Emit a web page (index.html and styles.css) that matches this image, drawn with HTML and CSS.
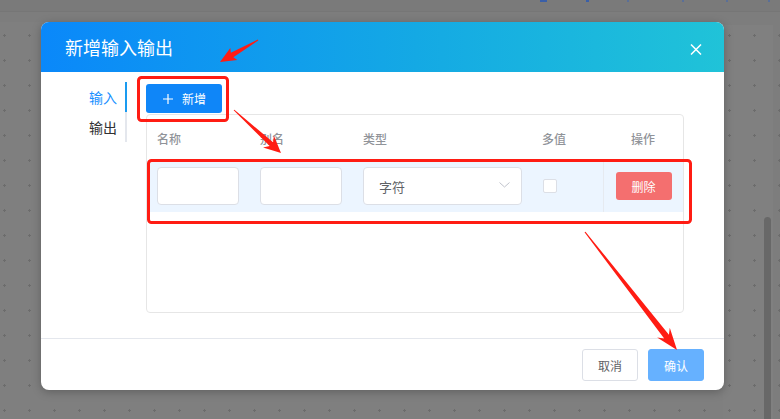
FILE: index.html
```html
<!DOCTYPE html>
<html lang="zh-CN">
<head>
<meta charset="utf-8">
<title>新增输入输出</title>
<link rel="stylesheet" href="styles.css">
</head>
<body>
<svg class="grid-bg" width="780" height="419" viewBox="0 0 780 419">
  <defs>
    <pattern id="dots" x="0" y="0" width="25" height="25" patternUnits="userSpaceOnUse">
      <rect x="3" y="10" width="3" height="1" fill="#6c6c6c"/>
      <rect x="4" y="9" width="1" height="3" fill="#6c6c6c"/>
    </pattern>
  </defs>
  <rect x="0" y="0" width="780" height="419" fill="url(#dots)"/>
</svg>

<div class="topbar">
  <svg class="topbar-icons" width="780" height="12" viewBox="0 0 780 12">
    <rect x="540" y="0" width="7" height="2" fill="#3a5fa8"/>
    <rect x="586" y="0" width="3" height="2" fill="#3a5fa8"/>
    <rect x="627" y="0" width="2" height="2" fill="#5a6f98"/>
    <rect x="682" y="0" width="2" height="2" fill="#5a6f98"/>
    <rect x="726" y="0" width="2" height="2" fill="#5a6f98"/>
    <rect x="768" y="0" width="2" height="2" fill="#5a6f98"/>
  </svg>
</div>

<div class="workspace">
  <div class="canvas"></div>
  <div class="side-panel">
    <div class="scrollbar"></div>
  </div>
</div>

<div class="dialog">
  <div class="dlg-header">
    <span class="dlg-title">新增输入输出</span>
    <svg class="dlg-close" width="12" height="11" viewBox="0 0 12 11">
      <path d="M1 0.5L11 10.5M11 0.5L1 10.5" stroke="#fff" stroke-width="1.5" fill="none"/>
    </svg>
  </div>

  <div class="dlg-body">
    <div class="tabs">
      <div class="tab active">输入</div>
      <div class="tab">输出</div>
    </div>

    <div class="panel">
      <button class="btn-add">
        <svg width="10" height="10" viewBox="0 0 10 10">
          <path d="M5 0V10M0 5H10" stroke="#fff" stroke-width="1.2" fill="none"/>
        </svg>
        <span>新增</span>
      </button>

      <div class="table">
        <div class="thead cols">
          <div class="cell">名称</div>
          <div class="cell">别名</div>
          <div class="cell">类型</div>
          <div class="cell">多值</div>
          <div class="cell center">操作</div>
        </div>
        <div class="trow cols">
          <div class="cell"><div class="input"></div></div>
          <div class="cell"><div class="input"></div></div>
          <div class="cell">
            <div class="select">
              <span>字符</span>
              <svg width="11" height="6" viewBox="0 0 11 6">
                <path d="M0.5 0.5L5.5 5L10.5 0.5" stroke="#c0c4cc" stroke-width="1" fill="none"/>
              </svg>
            </div>
          </div>
          <div class="cell"><span class="checkbox"></span></div>
          <div class="cell center op"><button class="btn-del">删除</button></div>
        </div>
      </div>
    </div>
  </div>

  <div class="dlg-footer">
    <button class="btn-cancel">取消</button>
    <button class="btn-ok">确认</button>
  </div>
</div>

<svg class="annot" width="780" height="419" viewBox="0 0 780 419">
  <rect x="138.5" y="77.5" width="89" height="43" rx="3" fill="none" stroke="#ff1c13" stroke-width="3"/>
  <rect x="148.5" y="160.5" width="542" height="62" rx="3" fill="none" stroke="#ff1c13" stroke-width="3"/>
  <polygon fill="#ff1c13" points="257.75,39.57 230.85,52.84 230.3,47.94 220,62 237.3,60.06 233.35,57.16 258.25,40.43"/>
  <polygon fill="#ff1c13" points="234.34,109.63 273.09,142.36 273.85,135.62 281,153 263.05,147.42 269.71,146.05 233.66,110.37"/>
  <polygon fill="#ff1c13" points="585.47,231.63 668.92,334.74 669.78,327.72 677,350 657.16,337.56 664.18,338.44 584.53,232.37"/>
</svg>
</body>
</html>
```

FILE: styles.css
```css
* { box-sizing: border-box; }

html, body {
  margin: 0;
  padding: 0;
}

body {
  width: 780px;
  height: 419px;
  overflow: hidden;
  position: relative;
  background: #7d7d7d;
  font-family: "Noto Sans CJK SC", "Noto Sans", sans-serif;
}

.grid-bg {
  position: absolute;
  left: 0;
  top: 0;
}

.topbar {
  position: relative;
  z-index: 1;
  height: 12px;
  background: #7a7a7a;
  border-bottom: 1px solid #767676;
}

.topbar-icons {
  display: block;
}

.workspace {
  display: flex;
  height: 407px;
}

.canvas {
  flex: 1;
  margin-top: 10px;
  background: #7f7f7f;
}

.side-panel {
  width: 50px;
  margin-top: 13px;
  margin-right: 7px;
  background: #808080;
  display: flex;
  flex-direction: column;
  align-items: flex-end;
  padding-right: 2px;
}

.scrollbar {
  margin-top: 192px;
  width: 7px;
  flex: 1;
  background: #686868;
  border-radius: 4px 4px 0 0;
}

/* Dialog */
.dialog {
  position: absolute;
  left: 41px;
  top: 22px;
  width: 683px;
  height: 368px;
  background: #fff;
  border-radius: 8px;
  overflow: hidden;
  box-shadow: 0 2px 10px rgba(0, 0, 0, 0.25);
  display: flex;
  flex-direction: column;
}

.dlg-header {
  height: 50px;
  flex: none;
  background: linear-gradient(90deg, #0a88fa 0%, #14a9e4 55%, #20c3d8 100%);
  display: flex;
  align-items: center;
  justify-content: space-between;
  padding: 0 22px 0 24px;
}

.dlg-title {
  color: #fff;
  font-size: 18px;
  line-height: 24px;
  margin-top: -1px;
}

.dlg-close {
  display: block;
  margin-top: 4px;
}

.dlg-body {
  flex: 1;
  display: flex;
  padding-top: 10px;
}

.tabs {
  width: 86px;
  flex: none;
  display: flex;
  flex-direction: column;
  align-self: flex-start;
}

.tab {
  height: 30px;
  line-height: 30px;
  text-align: right;
  padding-right: 8px;
  font-size: 14px;
  color: #303133;
  border-right: 2px solid #e4e7ed;
}

.tab.active {
  color: #1890ff;
  border-right-color: #1a9bf0;
}

.panel {
  margin-left: 19px;
  width: 538px;
  display: flex;
  flex-direction: column;
  padding-top: 2px;
}

.btn-add {
  width: 76px;
  height: 29px;
  border: none;
  border-radius: 3px;
  background: #0f86f8;
  color: #fff;
  font-family: inherit;
  font-size: 12px;
  display: flex;
  align-items: center;
  gap: 9px;
  padding: 0 0 0 17px;
}

.btn-add svg { display: block; }

.table {
  margin-top: 1px;
  height: 199px;
  border: 1px solid #e6e6e6;
  border-radius: 4px;
}

.cols {
  display: grid;
  grid-template-columns: 103px 103px 179px 71px 1fr;
}

.cell {
  display: flex;
  align-items: center;
  padding-left: 10px;
}

.cell.center {
  justify-content: center;
  padding-left: 0;
}

.thead {
  height: 45px;
  font-size: 12px;
  font-weight: 500;
  color: #909399;
}

.thead .cell { padding-top: 1px; }

.trow {
  height: 52px;
  background: #ecf5ff;
}

.input {
  width: 82px;
  height: 38px;
  background: #fff;
  border: 1px solid #dcdfe6;
  border-radius: 4px;
}

.select {
  width: 159px;
  height: 38px;
  background: #fff;
  border: 1px solid #dcdfe6;
  border-radius: 4px;
  display: flex;
  align-items: center;
  justify-content: space-between;
  padding: 0 11px 0 15px;
  font-size: 13px;
  color: #606266;
}

.select svg { display: block; margin-top: -3px; }

.checkbox {
  display: block;
  width: 14px;
  height: 14px;
  margin-left: 1px;
  background: #fff;
  border: 1px solid #dcdfe6;
  border-radius: 2px;
}

.op {
  border-left: 1px solid #e6eaf0;
}

.btn-del {
  width: 56px;
  height: 28px;
  border: none;
  border-radius: 3px;
  background: #f46f6f;
  color: #fff;
  font-family: inherit;
  font-size: 12px;
  padding: 0;
}

.dlg-footer {
  height: 52px;
  flex: none;
  border-top: 1px solid #e4e7ed;
  display: flex;
  justify-content: flex-end;
  align-items: flex-start;
  gap: 10px;
  padding: 10px 20px 0 0;
}

.dlg-footer button {
  width: 56px;
  height: 32px;
  border-radius: 3px;
  font-family: inherit;
  font-size: 12px;
  padding: 0;
}

.btn-cancel {
  background: #fff;
  border: 1px solid #dcdfe6;
  color: #606266;
}

.btn-ok {
  background: #66b1ff;
  border: 1px solid #66b1ff;
  color: #fff;
}

.annot {
  position: absolute;
  left: 0;
  top: 0;
  pointer-events: none;
}
```
